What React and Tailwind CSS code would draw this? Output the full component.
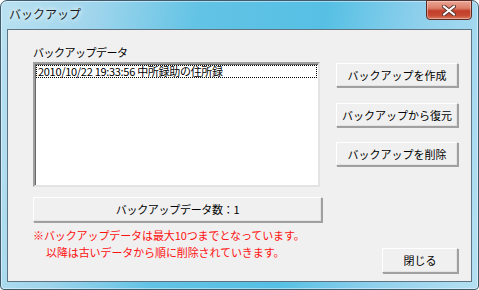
import React from "react";

const font = { fontFamily: '"Noto Sans CJK JP", "Noto Sans", sans-serif' };

function Btn({ children, className = "" }) {
  return (
    <div
      className={
        "flex items-center justify-center bg-[#f0f0f0] border border-t-white border-l-white border-r-[#a0a0a0] border-b-[#a0a0a0] shadow-[1px_1px_0_#a0a0a0,inset_-1px_-1px_0_#e3e3e3] text-[11px] leading-none text-black " +
        className
      }
    >
      {children}
    </div>
  );
}

export default function App() {
  return (
    <div
      style={font}
      className="w-[479px] h-[290px] rounded-t-[7px] rounded-b-[4px] border border-[#3f5b6d] bg-[linear-gradient(100deg,#b9e1f1_0%,#9fd5ec_18%,#62c3e5_38%,#56c0e4_62%,#8fd0ec_80%,#b5e0f2_100%)] flex flex-col px-[6px] pb-[7px] shadow-[inset_0_0_0_1px_rgba(255,255,255,0.45)]"
    >
      <div className="h-[28px] flex items-start">
        <div className="pl-[2px] mt-[5px] text-[12px] leading-[16px] text-[#1e1e1e] [text-shadow:0_0_5px_#ffffff,0_0_8px_#ffffff]">
          バックアップ
        </div>
        <div className="ml-auto -mt-[1px] w-[46px] h-[20px] rounded-b-[4px] border border-[#5a2a24] bg-[linear-gradient(180deg,#eba595_0%,#dc7f69_40%,#c23e29_55%,#c74a33_80%,#d97a5f_100%)] flex items-center justify-center shadow-[inset_0_0_0_1px_rgba(255,220,210,0.5)]">
          <svg width="14" height="11" viewBox="0 0 14 11">
            <path d="M2 1.5 L12 9.5 M12 1.5 L2 9.5" stroke="#5a3530" strokeWidth="4" strokeLinecap="round" />
            <path d="M2 1.5 L12 9.5 M12 1.5 L2 9.5" stroke="#ffffff" strokeWidth="2.2" strokeLinecap="round" />
          </svg>
        </div>
      </div>
      <div className="flex-1 border border-[#5f7482] bg-[#f0f0f0] flex pl-[25px] pt-[15px] pb-[8px]">
        <div className="w-[289px] flex flex-col">
          <div className="h-[14px] text-[11px] leading-[14px] tracking-[-0.5px] text-black">
            バックアップデータ
          </div>
          <div className="mt-[3px] w-[287px] h-[125px] border-2 border-t-[#a0a0a0] border-l-[#a0a0a0] border-r-[#e3e3e3] border-b-[#e3e3e3] shadow-[inset_1px_1px_0_#696969] bg-white pt-[1px] pl-[1px] pr-[1px]">
            <div className="h-[13px] border border-dotted border-black flex items-center text-[11px] leading-none text-black tracking-[-0.3px] pl-[1px]">
              2010/10/22 19:33:56 中所録助の住所録
            </div>
          </div>
          <Btn className="mt-[10px] h-[25px] w-[289px]">
            <span className="tracking-[-0.3px]">バックアップデータ数：1</span>
          </Btn>
          <div className="mt-[5px] text-[11px] leading-[17px] tracking-[-0.1px] text-[#ff1010]">
            <div>※バックアップデータは最大10つまでとなっています。</div>
            <div className="pl-[13px]">以降は古いデータから順に削除されていきます。</div>
          </div>
        </div>
        <div className="ml-[14px] w-[122px] flex flex-col">
          <Btn className="mt-[18px] h-[24px] w-[122px]">バックアップを作成</Btn>
          <Btn className="mt-[16px] h-[24px] w-[122px]">バックアップから復元</Btn>
          <Btn className="mt-[15px] h-[24px] w-[122px]">バックアップを削除</Btn>
          <Btn className="mt-auto self-end h-[25px] w-[76px]">閉じる</Btn>
        </div>
      </div>
    </div>
  );
}
